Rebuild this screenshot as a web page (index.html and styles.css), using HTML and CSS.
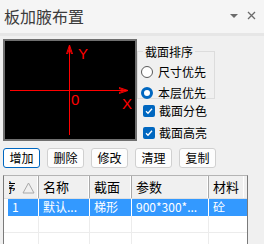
FILE: index.html
```html
<!DOCTYPE html>
<html lang="zh">
<head>
<meta charset="utf-8">
<link rel="stylesheet" href="styles.css">
</head>
<body>
<div class="panel">
  <div class="titlebar">
    <span class="title">板加腋布置</span>
    <span class="tools">
      <svg class="ico" width="8" height="6" viewBox="0 0 8 6"><path d="M0 1 L8 1 L4 5 Z" fill="#6b6b6b"/></svg>
      <svg class="ico" width="9" height="9" viewBox="0 0 9 9"><path d="M1 1 L8 8 M8 1 L1 8" stroke="#6b6b6b" stroke-width="1.3"/></svg>
    </span>
  </div>
  <div class="content">
    <div class="top">
      <div class="canvas">
        <svg width="130" height="98" viewBox="0 0 130 98">
          <g stroke="#ff0000" stroke-width="1" fill="none" shape-rendering="crispEdges">
            <path d="M64.5 4 V94"/>
            <path d="M5 49.5 H123"/>
          </g>
          <g stroke="#ff0000" stroke-width="1" fill="none">
            <path d="M64.5 4 L61.5 13 M64.5 4 L67.5 13 M64.5 7 L62.5 13 M64.5 7 L66.5 13"/>
            <path d="M123 49.5 L114 46.5 M123 49.5 L114 52.5 M120 49.5 L114 47.5 M120 49.5 L114 51.5"/>
          </g>
          <g fill="#ff0000" font-family="Liberation Sans, Arial, sans-serif" font-size="15">
            <text x="73" y="18">Y</text>
            <text x="66" y="64">0</text>
            <text x="117" y="68">X</text>
          </g>
        </svg>
      </div>
      <div class="opts">
        <fieldset class="group">
          <legend>截面排序</legend>
          <label class="opt"><span class="radio"></span>尺寸优先</label>
          <label class="opt"><span class="radio on"></span>本层优先</label>
        </fieldset>
        <label class="opt chk"><span class="check"><svg width="12" height="12" viewBox="0 0 12 12"><path d="M3 6.2 L5 8.2 L9 3.8" stroke="#fff" stroke-width="1.3" fill="none"/></svg></span>截面分色</label>
        <label class="opt chk"><span class="check"><svg width="12" height="12" viewBox="0 0 12 12"><path d="M3 6.2 L5 8.2 L9 3.8" stroke="#fff" stroke-width="1.3" fill="none"/></svg></span>截面高亮</label>
      </div>
    </div>
    <div class="buttons">
      <button class="btn focus">增加</button>
      <button class="btn">删除</button>
      <button class="btn">修改</button>
      <button class="btn">清理</button>
      <button class="btn">复制</button>
    </div>
    <div class="table">
      <div class="row head">
        <div class="c c0"><span class="clip"><span class="clip-in">序</span></span><svg class="sort" width="13" height="12" viewBox="0 0 13 12"><path d="M6.5 1 L12 11 L1 11 Z" fill="none" stroke="#a8a8a8" stroke-width="1"/></svg></div>
        <div class="c c1">名称</div>
        <div class="c c2">截面</div>
        <div class="c c3">参数</div>
        <div class="c c4">材料</div>
      </div>
      <div class="row sel">
        <div class="c c0">1</div>
        <div class="c c1">默认...</div>
        <div class="c c2">梯形</div>
        <div class="c c3">900*300*...</div>
        <div class="c c4">砼</div>
      </div>
      <div class="row empty">
        <div class="c c0"></div>
        <div class="c c1"></div>
        <div class="c c2"></div>
        <div class="c c3"></div>
        <div class="c c4"></div>
      </div>
      <div class="row empty">
        <div class="c c0"></div>
        <div class="c c1"></div>
        <div class="c c2"></div>
        <div class="c c3"></div>
        <div class="c c4"></div>
      </div>
    </div>
  </div>
</div>
</body>
</html>
```
FILE: styles.css
```css
* { box-sizing: border-box; }
html, body { margin: 0; padding: 0; }
body {
  width: 264px;
  height: 244px;
  overflow: hidden;
  background: #f0f0f0;
  font-family: "Noto Sans CJK SC", "Noto Sans", sans-serif;
  font-size: 12px;
  color: #000;
}
.panel { width: 264px; height: 244px; overflow: hidden; }
.titlebar {
  height: 36px;
  background: #f5f5f5;
  border-bottom: 3px solid #e6e6e6;
  display: flex;
  align-items: center;
  justify-content: space-between;
  padding: 0 8px 0 4px;
}
.title { font-size: 16px; color: #3c3c3c; line-height: 20px; margin-top: -2px; }
.tools { display: flex; align-items: center; gap: 9px; margin-top: -2px; }
.ico { display: block; }
.content { padding: 3px 0 0 3px; }
.top { display: flex; align-items: flex-start; }
.canvas {
  width: 134px;
  height: 102px;
  border: 2px solid #6f6f6f;
  background: #000;
  flex: none;
}
.canvas svg { display: block; }
.opts { margin-left: 0; display: flex; flex-direction: column; }
.group {
  margin: 5px 0 0 0;
  padding: 0 0 4px 3px;
  width: 78px;
  height: 55px;
  border: 1px solid #dcdcdc;
  border-radius: 0;
}
.group legend {
  padding: 0 2px;
  margin-left: 2px;
  line-height: 15px;
  font-size: 12px;
}
.opt {
  display: flex;
  align-items: center;
  height: 21px;
  line-height: 16px;
  white-space: nowrap;
}
.group .opt:first-of-type { margin-top: 2px; }
.radio {
  width: 12px; height: 12px;
  border-radius: 50%;
  border: 1px solid #5a5a5a;
  background: #fff;
  margin-right: 5px;
  flex: none;
}
.radio.on {
  border: 3px solid #0067c0;
  background: #fff;
}
.chk { margin-left: 6px; height: 22px; }
.chk:first-of-type { margin-top: 1px; }
.check {
  width: 12px; height: 12px;
  border-radius: 2px;
  background: #0067c0;
  margin-right: 4px;
  flex: none;
}
.check svg { display: block; }
.buttons {
  display: flex;
  gap: 7px;
  margin-top: 4px;
}
.btn {
  width: 37px;
  height: 20px;
  padding: 0;
  border: 1px solid #d0d0d0;
  border-radius: 3px;
  background: #fdfdfd;
  font-family: inherit;
  font-size: 12px;
  color: #000;
  line-height: 16px;
}
.btn.focus { border-color: #0067c0; background: #fff; }
.table {
  margin-top: 7px;
  width: 245px;
  height: 80px;
  border-left: 1px solid #7a7a7a;
  border-right: 1px solid #7a7a7a;
  border-top: 1px solid #b4b4b4;
  background: #fff;
}
.row { display: flex; }
.c {
  flex: none;
  overflow: hidden;
  white-space: nowrap;
  padding-left: 4px;
}
.c0 { width: 35px; }
.c1 { width: 51px; }
.c2 { width: 42px; }
.c3 { width: 77px; }
.c4 { width: 35px; }
.head { height: 23px; background: #f0f0f0; border-bottom: 1px solid #e0e0e0; }
.head .c {
  line-height: 22px;
  border-right: 1px solid #a8a8a8;
  box-shadow: inset -1px 0 0 #fff;
  font-size: 13px;
}
.head .c0 { padding-left: 5px; display: flex; align-items: center; }
.clip { display: block; width: 6px; overflow: hidden; height: 22px; flex: none; }
.clip-in { display: block; margin-left: -6px; }
.sort { display: block; margin-left: 7px; margin-top: 1px; flex: none; }
.sel { height: 17px; margin-left: 4px; background: #3399ff; color: #fff; }
.sel .c { line-height: 16px; border-right: 1px solid #fff; }
.sel .c0 { width: 31px; }
.empty { height: 17px; border-bottom: 1px solid #ececec; }
.empty .c { border-right: 1px solid #ececec; height: 17px; }
.c4 { border-right: none !important; }
.sel .c4 { width: 36px; }
```
